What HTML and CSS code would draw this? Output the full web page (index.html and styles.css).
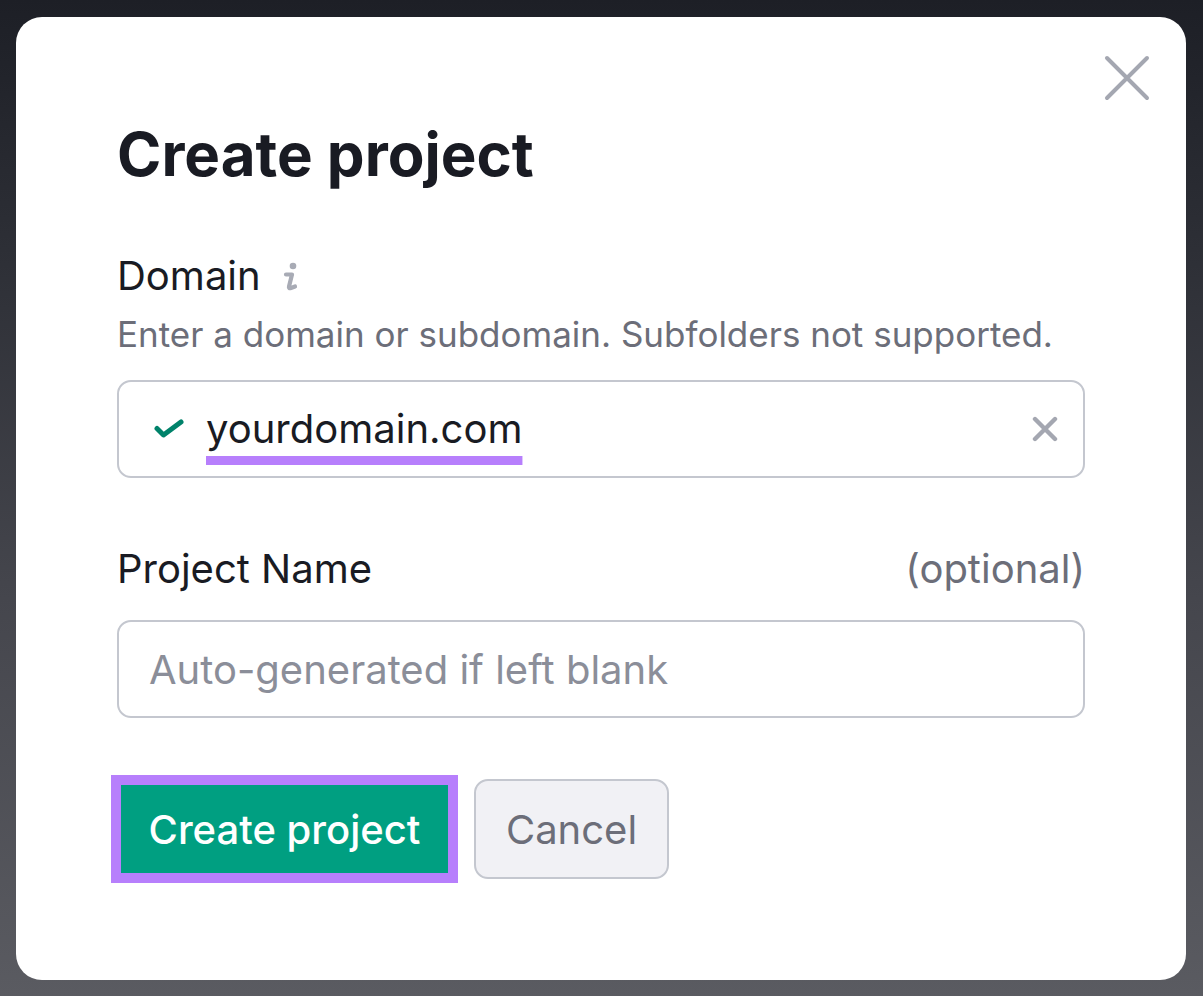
FILE: index.html
```html
<!DOCTYPE html>
<html lang="en">
<head>
<meta charset="utf-8">
<title>Create project</title>
<link rel="stylesheet" href="styles.css">
</head>
<body>
<div class="backdrop">
  <div class="modal">
    <button class="close" aria-label="Close">
      <svg width="46" height="46" viewBox="0 0 46 46"><path d="M3 3 L43 43 M43 3 L3 43" stroke="#a4a7b1" stroke-width="4" stroke-linecap="round"/></svg>
    </button>
    <h1 class="title">Create project</h1>

    <div class="field">
      <div class="label-row">
        <span class="label">Domain</span>
        <svg class="info" width="18" height="30" viewBox="0 0 18 30"><circle cx="11" cy="4" r="3.3" fill="#a8abb5"/><path d="M4 12.5 H10 L7 24.5 C6.6 26 7.4 26.6 9 26 L13 24.5" fill="none" stroke="#a8abb5" stroke-width="4.2" stroke-linecap="round" stroke-linejoin="round"/></svg>
      </div>
      <div class="hint">Enter a domain or subdomain. Subfolders not supported.</div>
      <div class="input filled">
        <svg class="check" width="30" height="20" viewBox="0 0 30 20"><path d="M3 9.5 L9.5 16 L27 3" fill="none" stroke="#00826a" stroke-width="5" stroke-linecap="round" stroke-linejoin="round"/></svg>
        <span class="value">yourdomain.com</span>
        <svg class="clear" width="26" height="26" viewBox="0 0 26 26"><path d="M3 3 L23 23 M23 3 L3 23" stroke="#a4a7b1" stroke-width="4.4" stroke-linecap="round"/></svg>
      </div>
    </div>

    <div class="field second">
      <div class="label-row spread">
        <span class="label">Project Name</span>
        <span class="optional">(optional)</span>
      </div>
      <div class="input">
        <span class="placeholder">Auto-generated if left blank</span>
      </div>
    </div>

    <div class="actions">
      <div class="focus-ring"><button class="btn primary">Create project</button></div>
      <button class="btn secondary">Cancel</button>
    </div>
  </div>
</div>
</body>
</html>
```

FILE: styles.css
```css
* { box-sizing: border-box; }
html, body { margin: 0; padding: 0; }
body {
  width: 1203px;
  height: 996px;
  overflow: hidden;
  background: linear-gradient(180deg, #1d1f26 0%, #2d2f36 25%, #45464d 60%, #5a5b61 100%);
  font-family: "Inter", "Noto Sans", sans-serif;
}
.backdrop {
  padding: 17px 17px 16px 16px;
  height: 996px;
}
.modal {
  position: relative;
  background: #ffffff;
  border-radius: 26px;
  height: 963px;
  padding: 100px 101px 0 101px;
  display: flex;
  flex-direction: column;
}
.close {
  position: absolute;
  top: 38px;
  right: 36px;
  width: 46px;
  height: 46px;
  padding: 0;
  border: 0;
  background: none;
  display: flex;
}
.title {
  margin: 0;
  font-size: 60px;
  line-height: 75px;
  font-weight: 700;
  color: #191b23;
  letter-spacing: 0;
}
.field {
  margin-top: 60px;
  display: flex;
  flex-direction: column;
}
.field.second { margin-top: 67px; }
.label-row {
  display: flex;
  align-items: center;
  height: 48px;
}
.label-row.spread { justify-content: space-between; }
.label {
  font-size: 40px;
  color: #191b23;
  line-height: 48px;
}
.info { margin-left: 21px; margin-top: 2px; }
.optional {
  font-size: 40px;
  color: #6c6e79;
  line-height: 48px;
}
.hint {
  margin-top: 13px;
  font-size: 35px;
  line-height: 42px;
  color: #6c6e79;
}
.input {
  margin-top: 25px;
  height: 98px;
  border: 2px solid #c4c7cf;
  border-radius: 14px;
  display: flex;
  align-items: center;
  padding: 0 25px 0 30px;
  font-size: 40px;
}
.field.second .input { margin-top: 27px; }
.check { margin-left: 5px; flex: none; }
.value {
  margin-left: 22px;
  color: #191b23;
  flex: 1;
  line-height: 48px;
  text-decoration: underline;
  text-decoration-color: #b77ffc;
  text-decoration-thickness: 9px;
  text-underline-offset: 13px;
  text-decoration-skip-ink: none;
}
.clear { flex: none; }
.placeholder { color: #8b8e99; }
.actions {
  margin-top: 57px;
  margin-left: -6px;
  display: flex;
  align-items: center;
  gap: 16px;
}
.focus-ring {
  border: 10px solid #b77ffc;
  display: flex;
}
.btn {
  font-family: "Inter", "Noto Sans", sans-serif;
  font-size: 40px;
  height: 88px;
  border: 0;
  padding: 0;
  cursor: pointer;
}
.primary {
  background: #009f81;
  color: #ffffff;
  font-weight: 500;
  width: 327px;
}
.secondary {
  background: #f1f1f5;
  color: #6c6e79;
  border: 2px solid #c4c7cf;
  border-radius: 14px;
  height: 100px;
  width: 195px;
}
```
